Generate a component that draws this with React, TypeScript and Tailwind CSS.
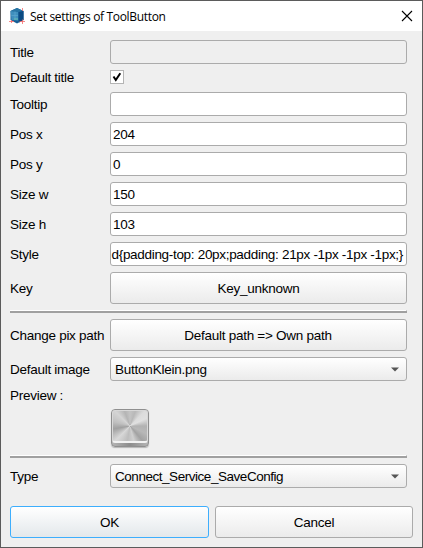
import React from 'react';

const edge = 'border border-[#ababab] rounded-[3px]';
const raised = 'bg-gradient-to-b from-white to-[#ebebeb]';

function Row({ label, className, children }: { label: string; className: string; children?: React.ReactNode }) {
  return (
    <div className={`flex items-center ${className}`}>
      <span className="w-[100px] shrink-0 whitespace-pre pt-[2px]">{label}</span>
      {children}
    </div>
  );
}

function Field({ value }: { value: string }) {
  return <div className={`${edge} flex h-6 w-[297px] items-center bg-white pl-[2px] pt-px`}>{value}</div>;
}

function Combo({ value, tracking }: { value: string; tracking: string }) {
  return (
    <div className={`${edge} ${raised} flex h-6 w-[297px] items-center justify-between pl-1 pr-[7px]`}>
      <span className={`pt-px ${tracking}`}>{value}</span>
      <svg width="8" height="5" viewBox="0 0 8 5">
        <path d="M0 0.5H8L4 4.5Z" fill="#555" />
      </svg>
    </div>
  );
}

function Rule({ className }: { className: string }) {
  return (
    <div className={`h-[3px] w-[397px] border-b-2 border-r border-t border-b-[#a0a0a0] border-r-[#a0a0a0] border-t-white ${className}`} />
  );
}

function AppIcon() {
  return (
    <svg width="16" height="16" viewBox="0 0 16 16">
      <path d="M8 0L14.5 3V12L8 15.5L1.5 12V3Z" fill="#175f96" />
      <path d="M8 0L14.5 3L10 4L1.5 3Z" fill="#2875a4" />
      <path d="M1.5 3L9 4V12.5L2.5 12Z" fill="#3f8fbd" />
      <path d="M10 4L14.5 3V12L10 14.5Z" fill="#0b4a82" />
      <path d="M2.5 7.5H9M6 3.5V12" stroke="#5ba8cf" strokeWidth="0.7" />
      <path d="M5 11H9" stroke="#69c0ae" />
      <path d="M13.5 0V3M0 13.5H5M10.5 13.5H16M13.5 11.5V16M2.5 12V15" stroke="#f26a6a" strokeWidth="0.8" />
    </svg>
  );
}

export default function App() {
  return (
    <div className="h-[548px] w-[423px] overflow-hidden border border-[#5b5b5b] bg-[#efefef] font-['Liberation_Sans',Arial,sans-serif] text-[13.5px] leading-4 tracking-[-0.27px] text-black">
      <header className="flex h-[30px] items-center bg-white pl-2 pr-[9px]">
        <AppIcon />
        <span className="ml-[5px] grow pt-px font-['Open_Sans',sans-serif] text-[12px] tracking-[-0.33px]">Set settings of ToolButton</span>
        <svg width="12" height="12" viewBox="0 0 12 12" className="-mt-px">
          <path d="M1 1L11 11M11 1L1 11" stroke="#000" strokeWidth="1.1" />
        </svg>
      </header>
      <main className="pl-[9px] pt-[9px]">
        <Row label="Title" className="h-6">
          <div className={`${edge} h-6 w-[297px] bg-[#efefef]`} />
        </Row>
        <Row label="Default title" className="mt-[6px] h-[14px]">
          <div className="flex size-[14px] items-center justify-center border border-[#b4b4b4] bg-white">
            <svg width="10" height="10" viewBox="0 0 10 10">
              <path d="M1.5 4.5L3.8 8L8.3 1.2" fill="none" stroke="#000" strokeWidth="2" />
            </svg>
          </div>
        </Row>
        <Row label="Tooltip" className="mt-2 h-6"><Field value="" /></Row>
        <Row label="Pos x" className="mt-[6px] h-6"><Field value="204" /></Row>
        <Row label="Pos y" className="mt-[6px] h-6"><Field value="0" /></Row>
        <Row label="Size w" className="mt-[6px] h-6"><Field value="150" /></Row>
        <Row label="Size h" className="mt-[6px] h-6"><Field value="103" /></Row>
        <Row label="Style" className="mt-[6px] h-6">
          <div className={`${edge} flex h-6 w-[297px] items-center justify-end overflow-hidden whitespace-nowrap bg-white pr-[3px] pt-px tracking-[-0.31px]`}>
            d&#123;padding-top: 20px;padding: 21px -1px -1px -1px;&#125;
          </div>
        </Row>
        <Row label="Key" className="mt-[6px] h-8">
          <button className={`${edge} ${raised} h-8 w-[297px] pt-px`}>Key_unknown</button>
        </Row>
        <Rule className="mt-[6px]" />
        <Row label="Change pix path" className="mt-[6px] h-8">
          <button className={`${edge} ${raised} h-8 w-[297px] pr-px pt-px`}>Default path =&gt; Own path</button>
        </Row>
        <Row label="Default image" className="mt-[6px] h-6"><Combo value="ButtonKlein.png" tracking="tracking-[-0.23px]" /></Row>
        <Row label="Preview :" className="mt-[6px] h-4" />
        <div className="ml-[101px] mt-[6px] h-[38px] w-[38px] rounded-[4px] border border-[#8f8f8f] bg-gradient-to-r from-[#b5b5b5] via-[#8c8c8c] to-[#b5b5b5] pb-[3px] shadow-[0_1px_1px_#b5b5b5]">
          <div className="h-full rounded-[3px] border border-b-2 border-[#d8d8d8] border-b-[#f2f2f2] bg-[conic-gradient(#c4c4c4_0deg,#b8b8b8_20deg,#dcdcdc_45deg,#e0e0e0_65deg,#b2b2b2_90deg,#b8b8b8_115deg,#a2a2a2_140deg,#d0d0d0_165deg,#bdbdbd_190deg,#d8d8d8_225deg,#a0a0a0_260deg,#c0c0c0_285deg,#d4d4d4_315deg,#b4b4b4_340deg,#c4c4c4_360deg)]" />
        </div>
        <Rule className="mt-[8px]" />
        <Row label="Type" className="mt-[6px] h-6"><Combo value="Connect_Service_SaveConfig" tracking="tracking-[-0.46px]" /></Row>
        <footer className="mt-[18px] flex gap-[6px]">
          <button className="h-8 w-[199px] rounded-[3px] border border-[#3daefd] bg-gradient-to-b from-white to-[#e3e8eb] pt-px">OK</button>
          <button className={`${edge} ${raised} h-8 w-[198px] pt-px`}>Cancel</button>
        </footer>
      </main>
    </div>
  );
}
